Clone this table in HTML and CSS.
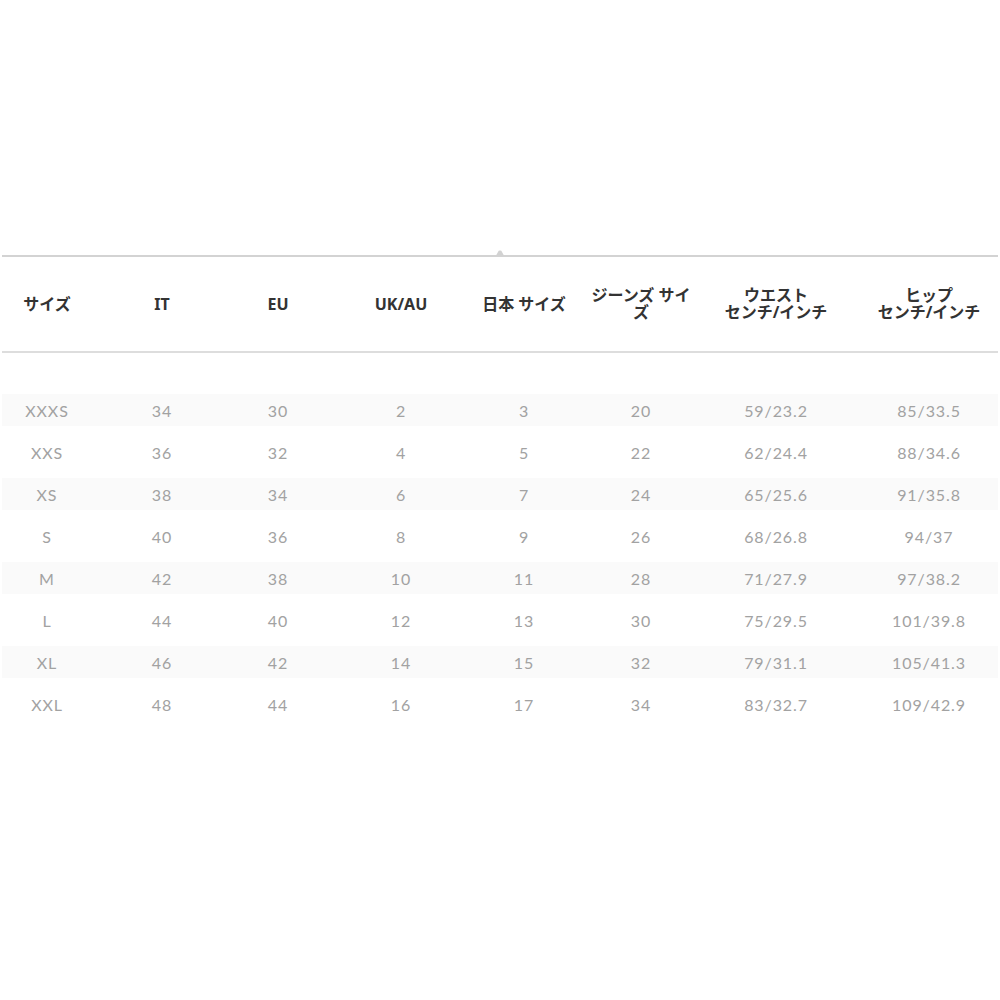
FILE: index.html
```html
<!DOCTYPE html>
<html lang="ja">
<head>
<meta charset="utf-8">
<title>サイズ表</title>
<link rel="stylesheet" href="styles.css">
</head>
<body>
<div class="page">
  <div class="chart">
    <span class="notch"></span>
    <div class="row head">
      <div class="cell">サイズ</div>
      <div class="cell">IT</div>
      <div class="cell">EU</div>
      <div class="cell">UK/AU</div>
      <div class="cell">日本 サイズ</div>
      <div class="cell narrow">ジーンズ サイズ</div>
      <div class="cell">ウエスト<br>センチ/インチ</div>
      <div class="cell">ヒップ<br>センチ/インチ</div>
    </div>
    <div class="body">
      <div class="row"><div class="cell">XXXS</div><div class="cell">34</div><div class="cell">30</div><div class="cell">2</div><div class="cell">3</div><div class="cell">20</div><div class="cell">59/23.2</div><div class="cell">85/33.5</div></div>
      <div class="row"><div class="cell">XXS</div><div class="cell">36</div><div class="cell">32</div><div class="cell">4</div><div class="cell">5</div><div class="cell">22</div><div class="cell">62/24.4</div><div class="cell">88/34.6</div></div>
      <div class="row"><div class="cell">XS</div><div class="cell">38</div><div class="cell">34</div><div class="cell">6</div><div class="cell">7</div><div class="cell">24</div><div class="cell">65/25.6</div><div class="cell">91/35.8</div></div>
      <div class="row"><div class="cell">S</div><div class="cell">40</div><div class="cell">36</div><div class="cell">8</div><div class="cell">9</div><div class="cell">26</div><div class="cell">68/26.8</div><div class="cell">94/37</div></div>
      <div class="row"><div class="cell">M</div><div class="cell">42</div><div class="cell">38</div><div class="cell">10</div><div class="cell">11</div><div class="cell">28</div><div class="cell">71/27.9</div><div class="cell">97/38.2</div></div>
      <div class="row"><div class="cell">L</div><div class="cell">44</div><div class="cell">40</div><div class="cell">12</div><div class="cell">13</div><div class="cell">30</div><div class="cell">75/29.5</div><div class="cell">101/39.8</div></div>
      <div class="row"><div class="cell">XL</div><div class="cell">46</div><div class="cell">42</div><div class="cell">14</div><div class="cell">15</div><div class="cell">32</div><div class="cell">79/31.1</div><div class="cell">105/41.3</div></div>
      <div class="row"><div class="cell">XXL</div><div class="cell">48</div><div class="cell">44</div><div class="cell">16</div><div class="cell">17</div><div class="cell">34</div><div class="cell">83/32.7</div><div class="cell">109/42.9</div></div>
    </div>
  </div>
</div>
</body>
</html>
```

FILE: styles.css
```css
html, body {
  margin: 0;
  padding: 0;
  background: #ffffff;
}

.page {
  padding-top: 255px;
}

.chart {
  position: relative;
  width: 996px;
  margin-left: 2px;
}

.notch {
  position: absolute;
  left: 492px;
  top: -5px;
  width: 12px;
  height: 6px;
  background: #d2d2d2;
  border-radius: 6px 6px 0 0;
  clip-path: polygon(15% 100%, 40% 10%, 60% 10%, 85% 100%);
}

.row {
  display: grid;
  grid-template-columns: 90px 140px 92px 154px 92px 142px 128px 158px;
  align-items: center;
}

.cell {
  text-align: center;
}

.cell:last-child {
  padding-left: 20px;
}

.head {
  height: 94px;
  border-top: 2px solid #d3d3d3;
  border-bottom: 2px solid #dddddd;
  font-family: "Noto Sans", "Noto Sans CJK JP", sans-serif;
  font-weight: 700;
  font-size: 16px;
  line-height: 17px;
  color: #333333;
}

.head .narrow {
  padding: 0 14px;
}

.body {
  display: flex;
  flex-direction: column;
  gap: 10px;
  padding-top: 41px;
}

.body .row {
  height: 32px;
  font-family: "Lato", "Liberation Sans", sans-serif;
  font-weight: 400;
  font-size: 16px;
  letter-spacing: 0.9px;
  color: #a2a2a2;
}

.body .row:nth-child(odd) {
  background: #fafafa;
}
```
